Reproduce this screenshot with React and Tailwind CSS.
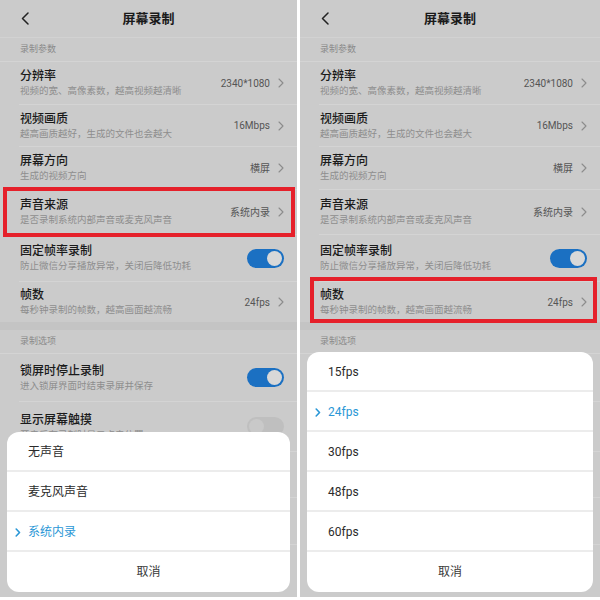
import React from "react";

const FONT = { fontFamily: 'Roboto, "Noto Sans CJK SC", sans-serif' };

function Chevron({ className = "" }) {
  return (
    <svg className={className} width="6" height="10" viewBox="0 0 6 10" fill="none">
      <path d="M1 1l4 4-4 4" stroke="currentColor" strokeWidth="1.1" strokeLinecap="round" strokeLinejoin="round" />
    </svg>
  );
}

function Toggle({ on }) {
  return on ? (
    <div className="w-[37px] h-[19px] rounded-full bg-[#1b70c2] flex items-center justify-end pr-[2px]">
      <div className="w-[15px] h-[15px] rounded-full bg-[#d8d8d8]" />
    </div>
  ) : (
    <div className="w-[37px] h-[19px] rounded-full bg-[#bfbfbf] flex items-center justify-start pl-[2px]">
      <div className="w-[15px] h-[15px] rounded-full bg-[#c9c9c9]" />
    </div>
  );
}

function Row({ h, title, sub, value, toggle, last }) {
  return (
    <div className={`${h} pl-[19px]`}>
      <div className={`h-full flex items-center pl-[1px] pr-[13px] ${last ? "" : "border-b border-[#d4d4d4]"}`}>
        <div className="flex-1 min-w-0">
          {title && <div className="text-[12px] leading-[15px] font-medium text-[#1a1a1a] whitespace-nowrap">{title}</div>}
          {sub && <div className="text-[9.5px] leading-[13px] text-[#8e8e8e] whitespace-nowrap">{sub}</div>}
        </div>
        {value && (
          <div className="flex items-center text-[10px] text-[#555555]">
            <span>{value}</span>
            <Chevron className="ml-[8px] text-[#8c8c8c]" />
          </div>
        )}
        {toggle !== undefined && <Toggle on={toggle} />}
      </div>
    </div>
  );
}

function Section({ label, h }) {
  return (
    <div className={`${h} flex items-center pl-[20px] border-b border-[#d4d4d4] text-[9px] text-[#8a8a8a]`}>
      {label}
    </div>
  );
}

function Settings({ hideLower }) {
  return (
    <div className="flex flex-col">
      <div className="h-[38px] flex items-center border-b border-[#d2d2d2]">
        <div className="w-[60px] pl-[20px] flex items-center text-[#222]">
          <svg width="10" height="13" viewBox="0 0 10 13" fill="none">
            <path d="M8 1L2.5 6.5 8 12" stroke="currentColor" strokeWidth="1.5" strokeLinecap="round" strokeLinejoin="round" />
          </svg>
        </div>
        <div className="flex-1 text-center text-[13px] font-bold text-[#1a1a1a]">屏幕录制</div>
        <div className="w-[60px]" />
      </div>
      <Section label="录制参数" h="h-[24px]" />
      <Row h="h-[43px]" title="分辨率" sub="视频的宽、高像素数，越高视频越清晰" value="2340*1080" />
      <Row h="h-[42px]" title="视频画质" sub="越高画质越好，生成的文件也会越大" value="16Mbps" />
      <Row h="h-[43px]" title="屏幕方向" sub="生成的视频方向" value="横屏" />
      <Row h="h-[45px]" title="声音来源" sub="是否录制系统内部声音或麦克风声音" value="系统内录" />
      <Row h="h-[47px]" title="固定帧率录制" sub="防止微信分享播放异常，关闭后降低功耗" toggle={true} />
      <Row h="h-[40px]" title="帧数" sub="每秒钟录制的帧数，越高画面越流畅" value="24fps" last />
      <div className="h-[8px] bg-[#c4c4c4]" />
      <Section label="录制选项" h="h-[24px]" />
      {hideLower ? (
        <>
          <Row h="h-[48px]" />
          <Row h="h-[50px]" />
        </>
      ) : (
        <>
          <Row h="h-[48px]" title="锁屏时停止录制" sub="进入锁屏界面时结束录屏并保存" toggle={true} />
          <Row h="h-[50px]" title="显示屏幕触摸" sub="开启后在录制时显示点击位置" toggle={false} />
        </>
      )}
      <Row h="h-[46px]" />
      <Row h="h-[47px]" />
    </div>
  );
}

function Sheet({ items, selected }) {
  return (
    <div className="absolute left-[7px] right-[7px] bottom-[5px] bg-white rounded-[12px] overflow-hidden">
      {items.map((it) => (
        <div key={it} className="h-[40px] pt-[2px] border-b-2 border-[#ececec] flex items-center relative">
          {it === selected && (
            <svg className="absolute left-[8px]" width="6" height="9" viewBox="0 0 6 9" fill="none">
              <path d="M1.2 1l3.3 3.5-3.3 3.5" stroke="#2a97d6" strokeWidth="1.6" strokeLinecap="round" strokeLinejoin="round" />
            </svg>
          )}
          <span className={`pl-[21px] text-[12px] ${it === selected ? "text-[#2a97d6]" : "text-[#2b2b2b]"}`}>{it}</span>
        </div>
      ))}
      <div className="h-[40px] flex items-center justify-center text-[12px] text-[#3a3a3a]">取消</div>
    </div>
  );
}

export default function App() {
  return (
    <div className="w-[600px] h-[600px] bg-white flex gap-[3px] overflow-hidden" style={FONT}>
      <div className="relative w-[297px] h-[597px] bg-[#cbcbcb] overflow-hidden shrink-0">
        <Settings />
        <div className="absolute left-[3px] w-[292px] top-[187px] h-[50px] border-4 border-[#e5202a]" />
        <Sheet items={["无声音", "麦克风声音", "系统内录"]} selected="系统内录" />
      </div>
      <div className="relative w-[300px] h-[597px] bg-[#cbcbcb] overflow-hidden shrink-0">
        <Settings hideLower />
        <div className="absolute left-[10px] w-[287px] top-[277px] h-[46px] border-4 border-[#e5202a]" />
        <Sheet items={["15fps", "24fps", "30fps", "48fps", "60fps"]} selected="24fps" />
      </div>
    </div>
  );
}
